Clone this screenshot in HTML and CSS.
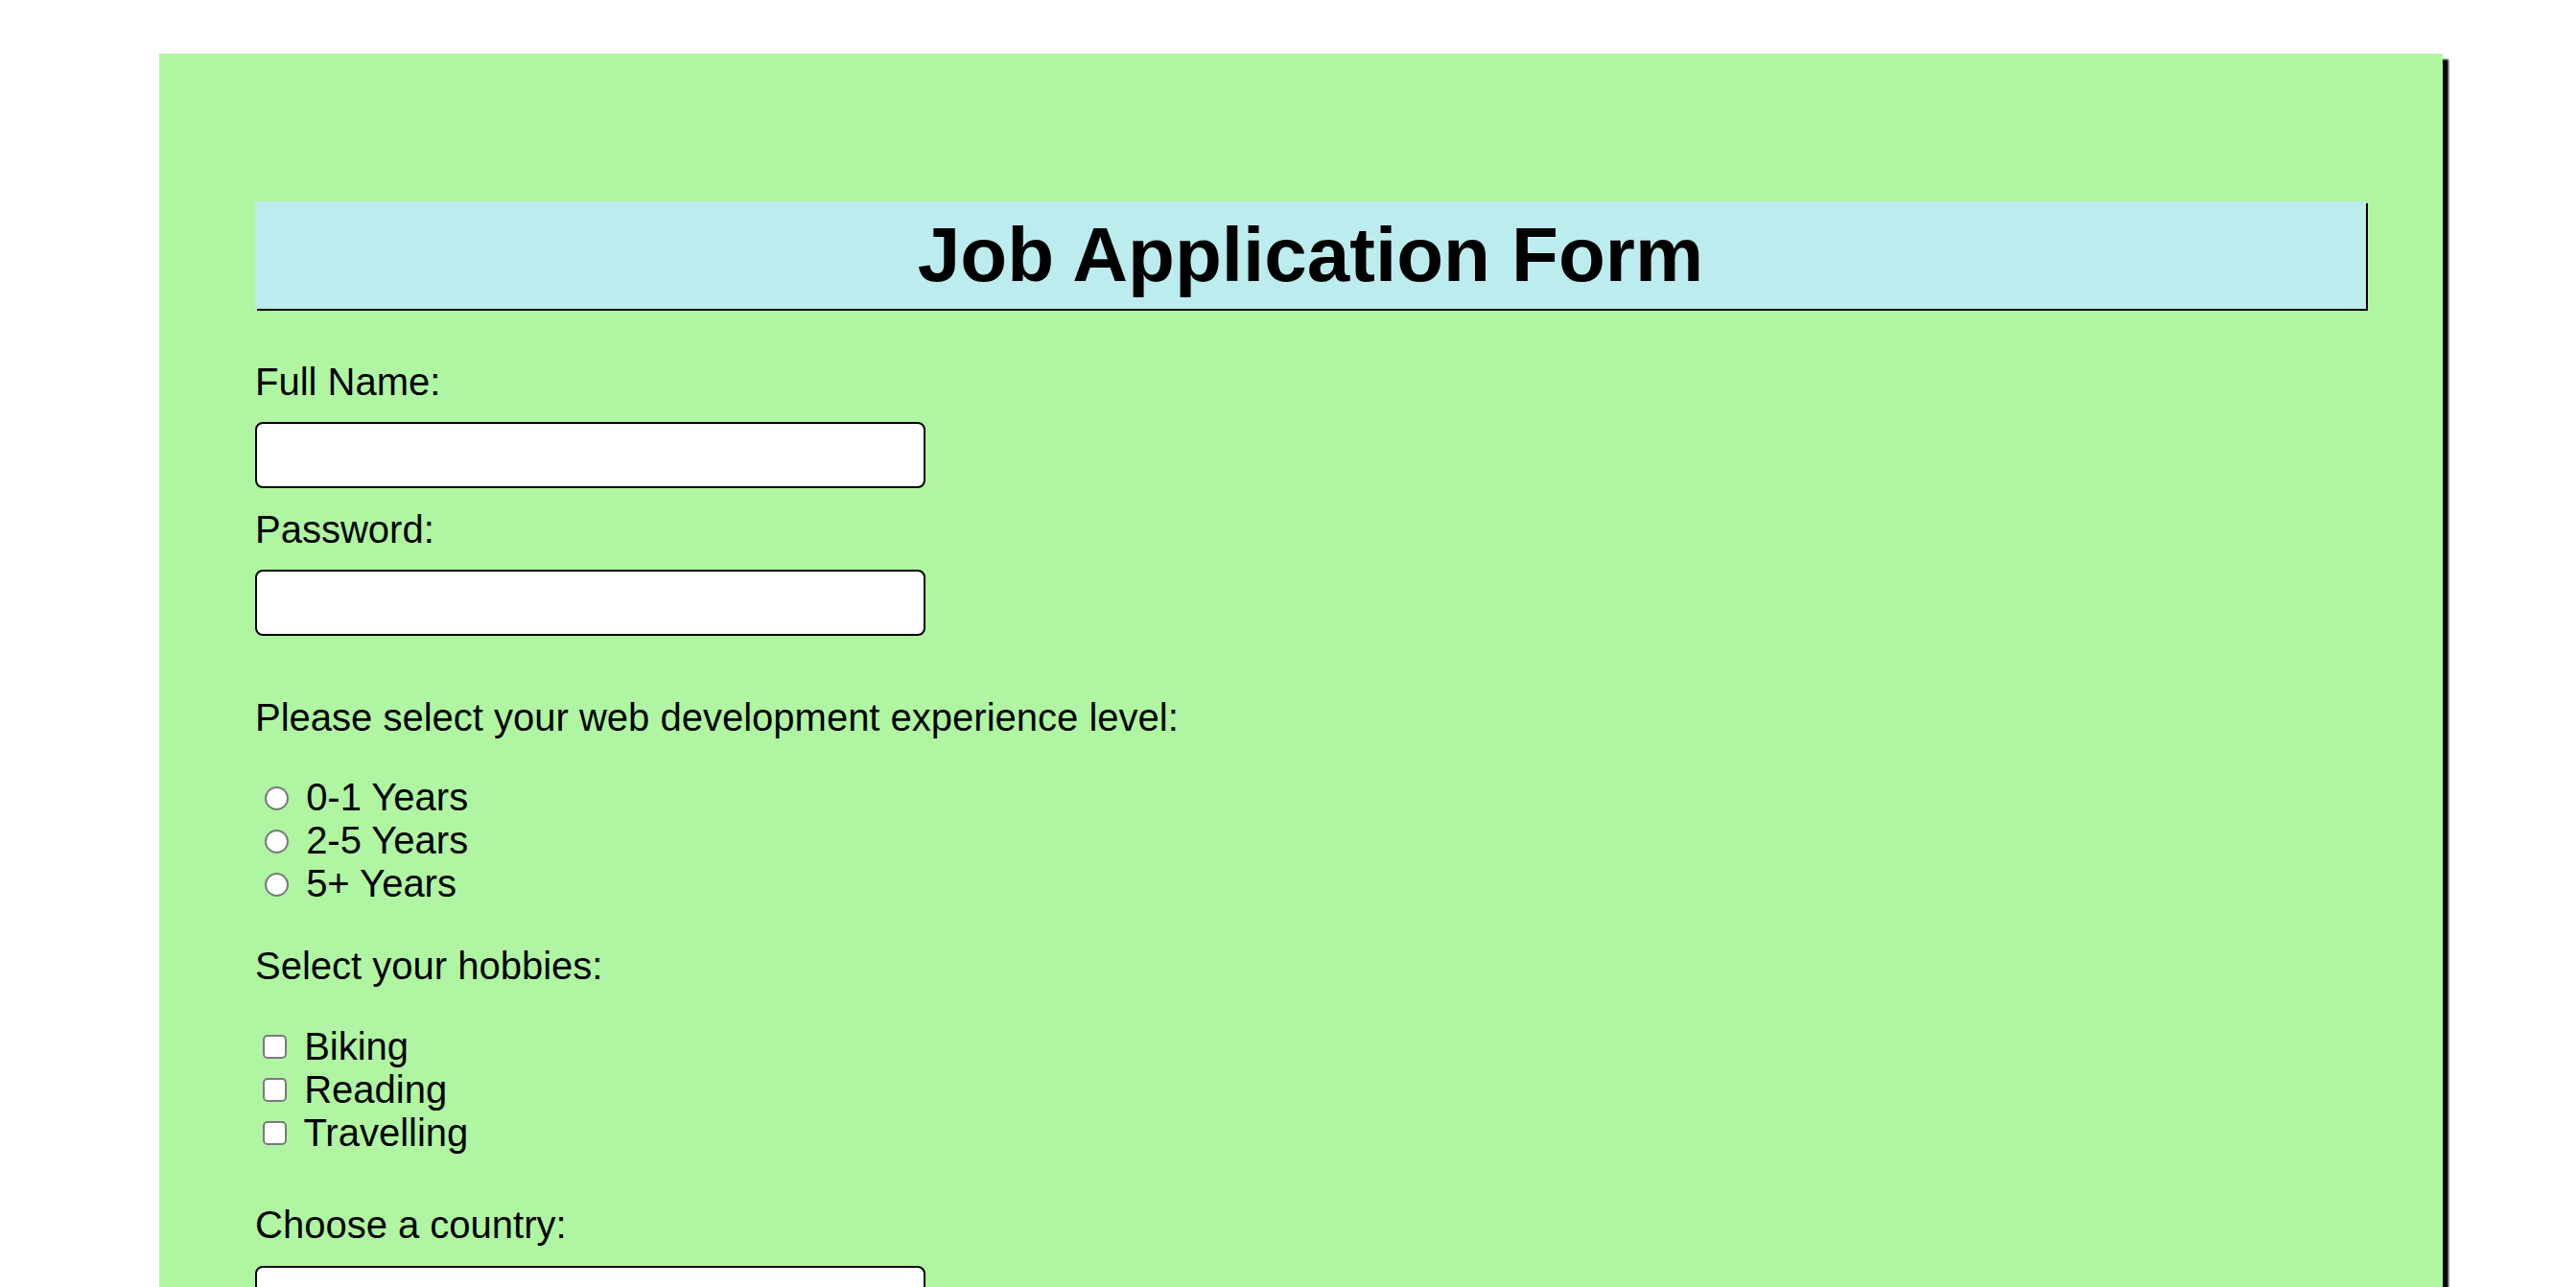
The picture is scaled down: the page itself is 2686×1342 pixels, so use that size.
FILE: index.html
```html
<!DOCTYPE html>
<html lang="en">
<head>
<meta charset="utf-8">
<title>Job Application Form</title>
<link rel="stylesheet" href="styles.css">
</head>
<body>
<div class="container">
  <h1 class="title">Job Application Form</h1>
  <form class="form">
    <label class="label label-first" for="name">Full Name:</label>
    <input class="field" type="text" id="name">
    <label class="label label-next" for="pw">Password:</label>
    <input class="field" type="password" id="pw">

    <p class="question q-exp">Please select your web development experience level:</p>
    <div class="options opt-radio">
      <div class="option"><input class="radio" type="radio" name="exp" id="e1"> <label for="e1">0-1 Years</label></div>
      <div class="option"><input class="radio" type="radio" name="exp" id="e2"> <label for="e2">2-5 Years</label></div>
      <div class="option"><input class="radio" type="radio" name="exp" id="e3"> <label for="e3">5+ Years</label></div>
    </div>

    <p class="question q-hobby">Select your hobbies:</p>
    <div class="options opt-check">
      <div class="option"><input class="check" type="checkbox" id="h1"> <label for="h1">Biking</label></div>
      <div class="option"><input class="check" type="checkbox" id="h2"> <label for="h2">Reading</label></div>
      <div class="option"><input class="check" type="checkbox" id="h3"> <label for="h3">Travelling</label></div>
    </div>

    <label class="question q-country" for="country">Choose a country:</label>
    <select class="field select" id="country">
      <option></option>
    </select>
  </form>
</div>
</body>
</html>
```
FILE: styles.css
```css
html, body {
  margin: 0;
  padding: 0;
  background: #ffffff;
  overflow: hidden;
}

body {
  font-family: "Liberation Sans", Arial, sans-serif;
  color: #000;
}

.container {
  margin: 56px 0 0 166px;
  width: 2381px;
  box-sizing: border-box;
  padding: 154px 80px 120px 100px;
  background: #b0f6a2;
  box-shadow: 6px 6px 2px #000;
}

.title {
  margin: 0;
  padding: 10px 0;
  background: #bdecee;
  box-shadow: 2px 2px 0 #000;
  text-align: center;
  font-size: 80px;
  font-weight: bold;
  line-height: 92px;
}

.form {
  display: flex;
  flex-direction: column;
  align-items: flex-start;
  font-size: 40px;
}

.label,
.question {
  display: block;
  margin: 0;
  line-height: 46px;
  font-size: 40px;
}

.label-first { margin-top: 53px; }
.label-next { margin-top: 20px; }

.field {
  display: block;
  box-sizing: border-box;
  width: 699px;
  height: 69px;
  margin: 19px 0 0 0;
  border: 2px solid #000;
  border-radius: 8px;
  background: #fff;
  font-size: 24px;
  font-family: "Liberation Sans", Arial, sans-serif;
}

.q-exp { margin-top: 62px; }
.q-hobby { margin-top: 40px; }
.q-country { margin-top: 50px; }

.options {
  display: flex;
  flex-direction: column;
}

.opt-radio { margin-top: 38px; }
.opt-check { margin-top: 39px; }

.option {
  line-height: 45px;
  height: 45px;
  white-space: nowrap;
}

.radio,
.check {
  -webkit-appearance: none;
  appearance: none;
  box-sizing: border-box;
  width: 25px;
  height: 25px;
  background: #fff;
  border: 2px solid #7a7a7a;
  vertical-align: baseline;
}

.radio {
  border-radius: 50%;
  margin: 0 7px 0 10px;
}

.check {
  border-radius: 5px;
  margin: 0 7px 1px 8px;
}

.select {
  margin-top: 20px;
}
```
